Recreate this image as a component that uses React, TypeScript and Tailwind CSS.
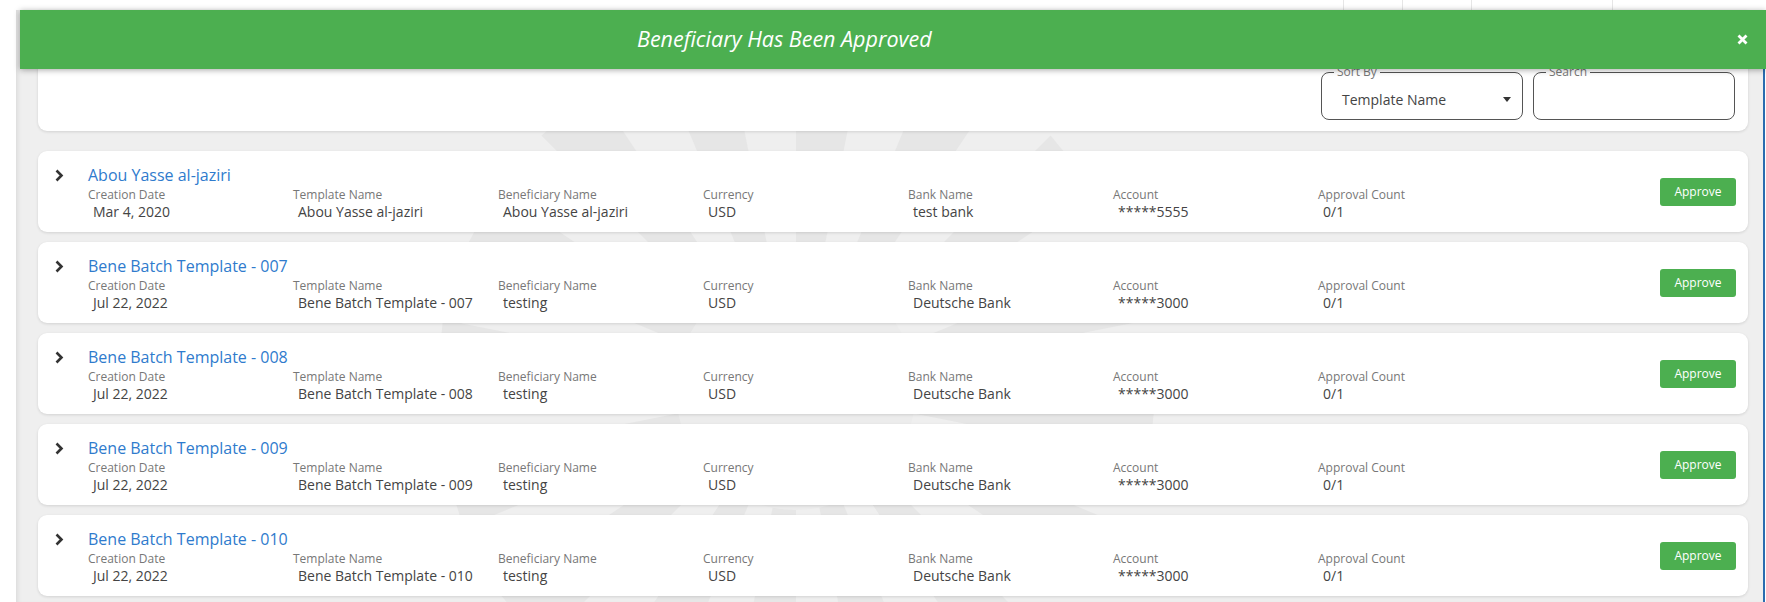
import React from "react";

type Row = {
  title: string;
  date: string;
  template: string;
  beneficiary: string;
  currency: string;
  bank: string;
  account: string;
  approvals: string;
};

const rows: Row[] = [
  {
    title: "Abou Yasse al-jaziri",
    date: "Mar 4, 2020",
    template: "Abou Yasse al-jaziri",
    beneficiary: "Abou Yasse al-jaziri",
    currency: "USD",
    bank: "test bank",
    account: "*****5555",
    approvals: "0/1",
  },
  ...["007", "008", "009", "010"].map((n) => ({
    title: `Bene Batch Template - ${n}`,
    date: "Jul 22, 2022",
    template: `Bene Batch Template - ${n}`,
    beneficiary: "testing",
    currency: "USD",
    bank: "Deutsche Bank",
    account: "*****3000",
    approvals: "0/1",
  })),
];

const Chevron = () => (
  <svg width="10" height="13" viewBox="0 0 10 13" className="block">
    <path d="M2.5 1.5 L7.5 6.5 L2.5 11.5" fill="none" stroke="#333" strokeWidth="2.6" />
  </svg>
);

// faint emblem behind the list
const Watermark = () => {
  const wedges = Array.from({ length: 16 });
  return (
    <svg
      width="760"
      height="760"
      viewBox="-380 -380 760 760"
      className="pointer-events-none absolute left-[400px] top-[0px]"
    >
      {wedges.map((_, i) => {
        const a1 = (i * 2 * Math.PI) / 16;
        const a2 = ((i + 0.5) * 2 * Math.PI) / 16;
        const r = 360;
        return (
          <path
            key={i}
            d={`M0 0 L${r * Math.cos(a1)} ${r * Math.sin(a1)} L${r * Math.cos(a2)} ${r * Math.sin(a2)} Z`}
            fill="#e6e6e6"
          />
        );
      })}
      <circle r="120" fill="#ececec" />
    </svg>
  );
};

const Card: React.FC<{ row: Row }> = ({ row }) => {
  const cols: [string, string][] = [
    ["Creation Date", row.date],
    ["Template Name", row.template],
    ["Beneficiary Name", row.beneficiary],
    ["Currency", row.currency],
    ["Bank Name", row.bank],
    ["Account", row.account],
    ["Approval Count", row.approvals],
  ];
  return (
    <div className="flex h-[81px] items-center rounded-[9px] bg-white pl-[16px] pr-[12px] shadow-[0_1px_3px_rgba(0,0,0,0.12)]">
      <div className="flex-1 pt-[1px]">
        <div className="flex h-[23px] items-center">
          <div className="w-[34px]">
            <Chevron />
          </div>
          <span className="text-[16px] text-[#2f7bcd]">{row.title}</span>
        </div>
        <div className="flex pl-[34px]">
          {cols.map(([label, value]) => (
            <div key={label} className="w-[205px]">
              <div className="text-[12px] leading-[16px] text-[#777]">{label}</div>
              <div className="pl-[5px] text-[14px] leading-[18px] text-[#444]">{value}</div>
            </div>
          ))}
        </div>
      </div>
      <button className="h-[28px] w-[76px] rounded-[3px] bg-[#4caf50] text-[12px] text-white">
        Approve
      </button>
    </div>
  );
};

export default function App() {
  return (
    <div className="relative h-[602px] overflow-hidden bg-white font-['Open_Sans',sans-serif]">
      {/* header strip behind the toast */}
      <div className="flex h-[10px] pl-[1343px]">
        <div className="w-[59px] border-l border-[#e6e6e6]" />
        <div className="w-[69px] border-l border-[#e6e6e6]" />
        <div className="w-[141px] border-l border-[#e6e6e6]" />
        <div className="flex-1 border-l border-[#e6e6e6]" />
      </div>

      <div className="relative ml-[16px] mr-[1px] h-[592px] border-r-2 border-[#2b6cb0] bg-[#efefef] pl-[22px] pr-[15px] shadow-[inset_4px_0_4px_-2px_rgba(0,0,0,0.08)]">
        <Watermark />
        <div className="relative flex h-[121px] items-end justify-end gap-[10px] rounded-b-[9px] bg-white pb-[11px] pr-[13px] shadow-[0_1px_3px_rgba(0,0,0,0.12)]">
          <fieldset className="h-[55px] w-[202px] rounded-[8px] border border-[#555] pl-[12px] pr-[11px]">
            <legend className="px-[3px] text-[12px] leading-[14px] text-[#777]">Sort By</legend>
            <div className="flex h-[40px] items-center justify-between pl-[8px]">
              <span className="text-[14px] text-[#444]">Template Name</span>
              <svg width="8" height="5" viewBox="0 0 8 5">
                <path d="M0 0 L8 0 L4 5 Z" fill="#333" />
              </svg>
            </div>
          </fieldset>
          <fieldset className="h-[55px] w-[202px] rounded-[8px] border border-[#555] pl-[12px] pr-[13px]">
            <legend className="px-[3px] text-[12px] leading-[14px] text-[#777]">Search</legend>
          </fieldset>
        </div>

        <div className="relative mt-[20px] flex flex-col gap-[10px]">
          {rows.map((r) => (
            <Card key={r.title} row={r} />
          ))}
        </div>
      </div>

      {/* toast */}
      <div className="absolute left-[20px] right-0 top-[10px] flex h-[59px] items-center bg-[#4caf50] shadow-[0_1px_6px_rgba(0,0,0,0.35)]">
        <span className="pl-[617px] text-[21.5px] italic text-white">Beneficiary Has Been Approved</span>
        <svg width="11" height="11" viewBox="0 0 11 11" className="ml-auto mr-[18px]">
          <path d="M1.5 1.5 L9.5 9.5 M9.5 1.5 L1.5 9.5" stroke="#fff" strokeWidth="2.8" />
        </svg>
      </div>
    </div>
  );
}
